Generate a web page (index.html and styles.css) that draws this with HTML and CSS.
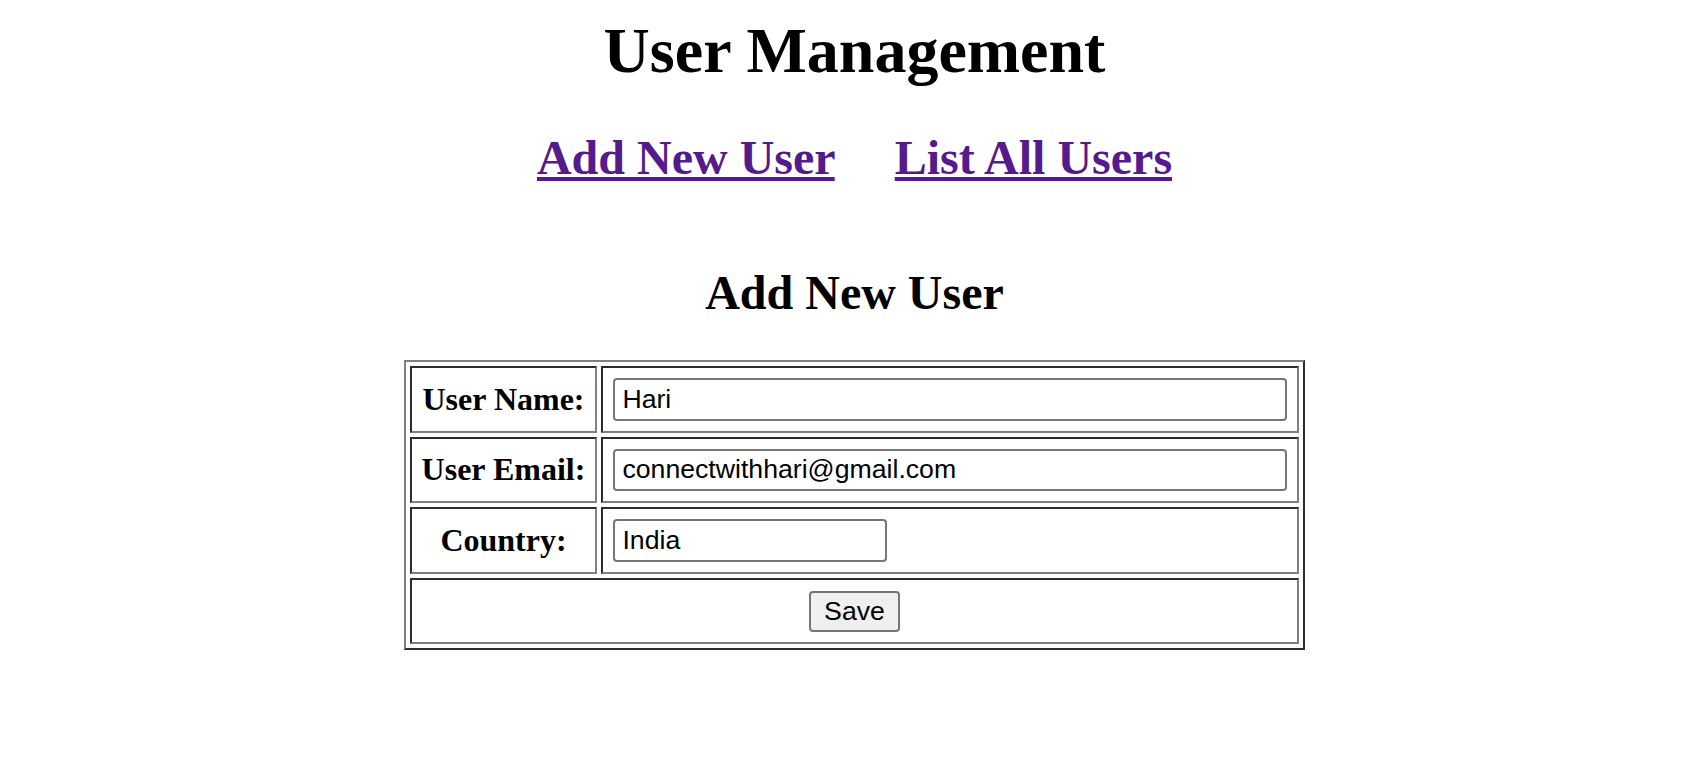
FILE: index.html
```html
<!DOCTYPE html>
<html lang="en">
<head>
<meta charset="utf-8">
<title>User Management Application</title>
<link rel="stylesheet" href="styles.css">
</head>
<body>
<header class="masthead">
  <h1 class="title">User Management</h1>
  <h2 class="nav"><a class="nav-link" href="#new">Add New User</a> &nbsp;&nbsp;&nbsp; <a class="nav-link" href="#list">List All Users</a></h2>
</header>
<main class="form-wrap">
  <form class="user-form" action="#" method="post">
    <table class="user-table">
      <caption class="caption"><h2 class="caption-title">Add New User</h2></caption>
      <tr>
        <th class="label">User Name:</th>
        <td class="field"><input class="text-input wide" type="text" name="name" value="Hari"></td>
      </tr>
      <tr>
        <th class="label">User Email:</th>
        <td class="field"><input class="text-input wide" type="text" name="email" value="connectwithhari@gmail.com"></td>
      </tr>
      <tr>
        <th class="label">Country:</th>
        <td class="field"><input class="text-input narrow" type="text" name="country" value="India"></td>
      </tr>
      <tr>
        <td class="actions" colspan="2"><input class="save-btn" type="submit" value="Save"></td>
      </tr>
    </table>
  </form>
</main>
</body>
</html>
```

FILE: styles.css
```css
html {
  background: #ffffff;
}

body {
  margin: 13.5px 16px 16px 17px;
  font-family: "Liberation Serif", "Times New Roman", serif;
  font-size: 32px;
  color: #000000;
}

.masthead {
  text-align: center;
}

.title {
  font-size: 64px;
  font-weight: bold;
  margin: 0 0 42.88px;
}

.nav {
  font-size: 48px;
  font-weight: bold;
  margin: 42.88px 0 39.84px;
}

.nav-link {
  color: #551a8b;
  text-decoration: underline;
}

.form-wrap {
  display: flex;
  justify-content: center;
}

.user-form {
  margin: 0;
}

.user-table {
  border-collapse: separate;
  border-spacing: 4px;
  border: 2px outset #808080;
}

.caption {
  text-align: center;
}

.caption-title {
  font-size: 48px;
  font-weight: bold;
  margin: 39.84px 0;
}

.label,
.field,
.actions {
  border: 2px inset #808080;
  padding: 10px;
  vertical-align: middle;
}

.label {
  font-weight: bold;
  text-align: center;
  white-space: nowrap;
}

.field {
  text-align: left;
}

.actions {
  text-align: center;
}

.text-input {
  box-sizing: border-box;
  height: 42.67px;
  margin: 0;
  padding: 2px 4px 2px 7px;
  border: 2px solid #767676;
  border-radius: 4px;
  background: #ffffff;
  color: #000000;
  font-family: "Liberation Sans", Arial, sans-serif;
  font-size: 26.67px;
  vertical-align: top;
}

.wide {
  width: 674px;
}

.narrow {
  width: 274px;
}

.save-btn {
  box-sizing: border-box;
  height: 41px;
  margin: 1.67px 0 0;
  padding: 0 13px;
  border: 2px solid #767676;
  border-radius: 4px;
  background: #efefef;
  color: #000000;
  font-family: "Liberation Sans", Arial, sans-serif;
  font-size: 26.67px;
  vertical-align: top;
}
```
